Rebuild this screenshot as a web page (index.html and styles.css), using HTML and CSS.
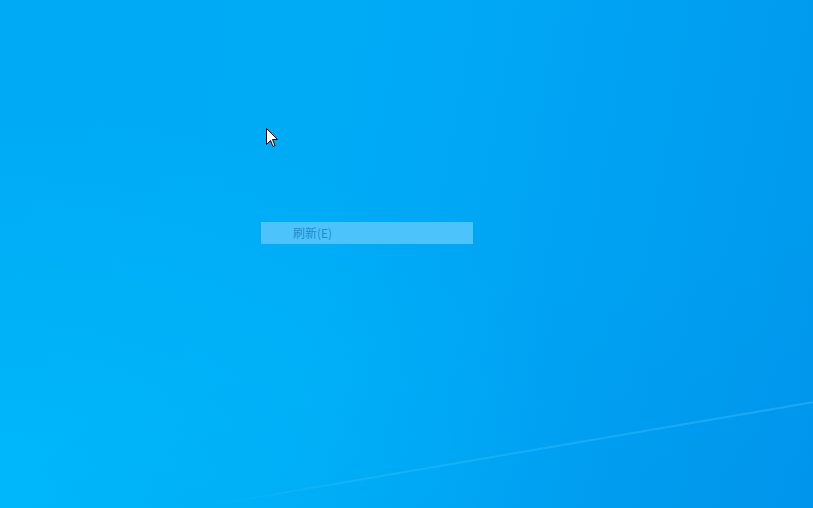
FILE: index.html
```html
<!DOCTYPE html>
<html lang="zh-CN">
<head>
<meta charset="utf-8">
<title>Desktop</title>
<link rel="stylesheet" href="styles.css">
</head>
<body>
<div class="desktop">
  <div class="shade"></div>
  <div class="streak"></div>
  <div class="menu">
    <div class="menu-item">刷新(E)</div>
  </div>
  <svg class="cursor" width="12" height="20" viewBox="0 0 12 20">
    <path d="M0.5 0.5 L0.5 16.5 L4.5 12.5 L7 18.5 L9 17.5 L6.5 11.5 L11.5 11.5 Z" fill="#fff" stroke="#000" stroke-width="1" stroke-linejoin="miter"/>
  </svg>
</div>
</body>
</html>
```

FILE: styles.css
```css
html, body {
  margin: 0;
  padding: 0;
  width: 100%;
  height: 100%;
  overflow: hidden;
}

.desktop {
  position: relative;
  width: 813px;
  height: 508px;
  overflow: hidden;
  background:
    radial-gradient(ellipse 600px 400px at 0% 100%, rgba(0, 194, 255, 0.6), rgba(0, 194, 255, 0) 100%),
    linear-gradient(100deg, #00aaf5 0%, #00abf6 40%, #00a6f4 58%, #00a0f2 75%, #0098ee 100%);
  font-family: "Noto Sans CJK SC", "Noto Sans", sans-serif;
}

.shade {
  position: absolute;
  inset: 0;
  background: linear-gradient(165deg, rgba(0, 120, 220, 0) 60%, rgba(0, 120, 220, 0.1) 100%);
}

.streak {
  position: absolute;
  left: 200px;
  top: 506px;
  width: 630px;
  height: 2px;
  background: linear-gradient(90deg, rgba(110, 215, 255, 0) 0%, rgba(110, 215, 255, 0.18) 30%, rgba(120, 220, 255, 0.25) 100%);
  transform: rotate(-9.7deg);
  transform-origin: 0 50%;
  filter: blur(0.6px);
}

.menu {
  position: absolute;
  left: 261px;
  top: 222px;
  width: 212px;
}

.menu-item {
  height: 22px;
  line-height: 22px;
  padding-left: 32px;
  background: #4cc4fb;
  color: #2589cd;
  font-size: 12px;
}

.cursor {
  position: absolute;
  left: 266px;
  top: 128px;
}
```
